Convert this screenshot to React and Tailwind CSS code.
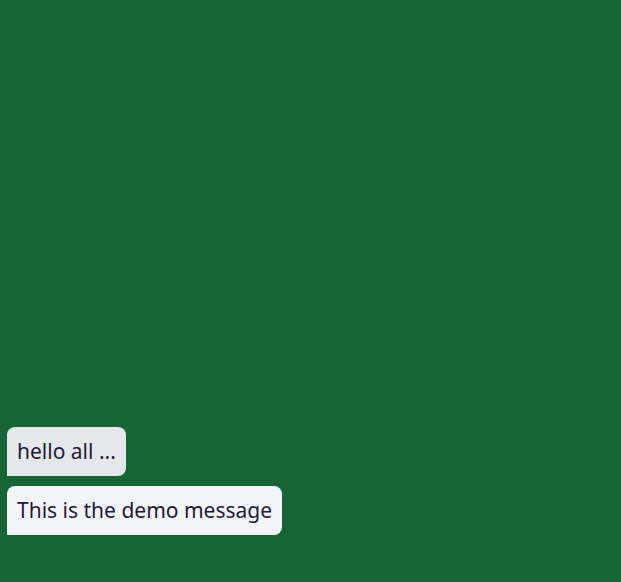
import React from "react";

const messages = [
  { id: 1, text: "hello all ...", bg: "bg-gray-200" },
  { id: 2, text: "This is the demo message", bg: "bg-gray-100" },
];

export default function App() {
  return (
    <div
      className="h-[582px] w-full bg-[#166534] flex flex-col justify-end gap-[10px] pl-[7px] pb-[47px]"
      style={{ fontFamily: '"Noto Sans", "Open Sans", sans-serif' }}
    >
      {messages.map((m) => (
        <div
          key={m.id}
          className={`${m.bg} self-start rounded-lg rounded-bl-none px-[10px] h-[49px] flex items-center text-[21px] text-[#1e1b3a]`}
        >
          {m.text}
        </div>
      ))}
    </div>
  );
}
